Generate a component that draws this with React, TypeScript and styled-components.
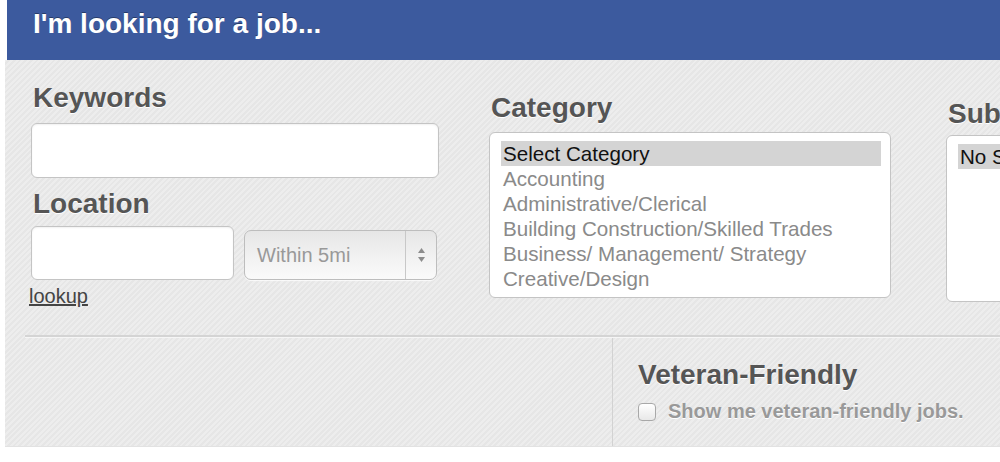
import React from 'react';
import styled, { createGlobalStyle } from 'styled-components';

const GlobalStyle = createGlobalStyle`
  html, body {
    margin: 0;
    padding: 0;
    background: #fff;
  }
  body {
    font-family: "Liberation Sans", Arial, Helvetica, sans-serif;
  }
`;

const Page = styled.div`
  width: 1000px;
  height: 462px;
  overflow: hidden;
  padding-left: 5px;
  box-sizing: border-box;
`;

const Header = styled.div`
  height: 60px;
  margin-left: 2px;
  background: #3c5a9e;
  padding: 8px 0 0 26px;
  box-sizing: border-box;
`;

const HeaderTitle = styled.h1`
  margin: 0;
  font-size: 28px;
  line-height: 32px;
  font-weight: bold;
  color: #fff;
  text-shadow: 0 -1px 0 rgba(0, 0, 0, 0.35);
`;

const Panel = styled.div`
  height: 386px;
  background: repeating-linear-gradient(135deg, #ededed 0 2px, #e6e6e6 2px 4px);
  border-bottom: 1px solid #e2e2e2;
`;

const TopRow = styled.div`
  display: flex;
  height: 275px;
  padding-left: 26px;
`;

const Column = styled.div<{ $top: number; $width: number; $gap?: number }>`
  display: flex;
  flex-direction: column;
  flex-shrink: 0;
  width: ${p => p.$width}px;
  padding-top: ${p => p.$top}px;
  margin-left: ${p => p.$gap || 0}px;
`;

const Label = styled.div<{ $mb?: number }>`
  font-size: 28px;
  line-height: 32px;
  font-weight: bold;
  color: #555;
  text-shadow: 0 1px 0 #fff;
  padding-left: 2px;
  margin-bottom: ${p => p.$mb || 0}px;
  white-space: nowrap;
`;

const TextBox = styled.div<{ $w: number; $h: number }>`
  width: ${p => p.$w}px;
  height: ${p => p.$h}px;
  box-sizing: border-box;
  background: #fff;
  border: 1px solid #c4c4c4;
  border-radius: 6px;
  box-shadow: inset 0 1px 2px rgba(0, 0, 0, 0.06);
`;

const Spacer = styled.div<{ $h: number }>`
  height: ${p => p.$h}px;
`;

const LocationRow = styled.div`
  display: flex;
  align-items: center;
  gap: 10px;
`;

const Select = styled.div`
  width: 193px;
  height: 50px;
  box-sizing: border-box;
  display: flex;
  align-items: stretch;
  border: 1px solid #bdbdbd;
  border-radius: 7px;
  background: linear-gradient(#e6e6e6, #f2f2f2 55%, #fafafa);
  box-shadow: 0 1px 1px rgba(255, 255, 255, 0.8);
  margin-top: 4px;
`;

const SelectValue = styled.div`
  flex: 1;
  display: flex;
  align-items: center;
  padding-left: 12px;
  font-size: 20px;
  color: #999;
`;

const SelectArrows = styled.div`
  width: 30px;
  border-left: 1px solid #c8c8c8;
  display: flex;
  align-items: center;
  justify-content: center;
`;

const Lookup = styled.a`
  margin-top: 5px;
  margin-left: -2px;
  font-size: 20px;
  line-height: 22px;
  color: #444;
  text-decoration: underline;
  align-self: flex-start;
`;

const ListBox = styled.div<{ $w: number; $h: number }>`
  width: ${p => p.$w}px;
  height: ${p => p.$h}px;
  box-sizing: border-box;
  background: #fff;
  border: 1px solid #c4c4c4;
  border-radius: 6px;
  padding: 8px 9px 0 11px;
  overflow: hidden;
`;

const Option = styled.div<{ $selected?: boolean }>`
  height: 25px;
  line-height: 25px;
  padding-left: 2px;
  font-size: 20.6px;
  white-space: nowrap;
  color: ${p => (p.$selected ? '#111' : '#8a8a8a')};
  background: ${p => (p.$selected ? '#d4d4d4' : 'transparent')};
`;

const Divider = styled.div`
  margin-left: 20px;
  height: 0;
  border-top: 2px solid #d4d4d4;
  border-bottom: 1px solid #f6f6f6;
`;

const BottomRow = styled.div`
  display: flex;
  height: 108px;
`;

const BottomLeft = styled.div`
  width: 607px;
  border-right: 1px solid #d2d2d2;
  flex-shrink: 0;
`;

const BottomRight = styled.div`
  padding: 21px 0 0 23px;
`;

const CheckRow = styled.div`
  display: flex;
  align-items: center;
  gap: 12px;
  margin-top: 9px;
  padding-left: 2px;
`;

const CheckBox = styled.span`
  display: inline-block;
  width: 18px;
  height: 18px;
  box-sizing: border-box;
  border: 1px solid #a8a8a8;
  border-radius: 4px;
  background: linear-gradient(#fff, #e8e8e8);
`;

const CheckText = styled.span`
  font-size: 20px;
  font-weight: bold;
  color: #999;
  text-shadow: 0 1px 0 #fff;
  white-space: nowrap;
`;

const categories = [
  'Accounting',
  'Administrative/Clerical',
  'Building Construction/Skilled Trades',
  'Business/ Management/ Strategy',
  'Creative/Design',
];

export default function App (): React.ReactElement {
  return (
    <Page>
      <GlobalStyle />
      <Header>
        <HeaderTitle>I'm looking for a job...</HeaderTitle>
      </Header>
      <Panel>
        <TopRow>
          <Column $top={22} $width={410}>
            <Label $mb={9}>Keywords</Label>
            <TextBox $w={408} $h={55} />
            <Spacer $h={10} />
            <Label $mb={6}>Location</Label>
            <LocationRow>
              <TextBox $w={203} $h={54} />
              <Select>
                <SelectValue>Within 5mi</SelectValue>
                <SelectArrows>
                  <svg width="9" height="16" viewBox="0 0 9 16">
                    <path d="M4.5 1 L8 6 H1 Z" fill="#8c8c8c" />
                    <path d="M4.5 15 L8 10 H1 Z" fill="#8c8c8c" />
                  </svg>
                </SelectArrows>
              </Select>
            </LocationRow>
            <Lookup href="#">lookup</Lookup>
          </Column>
          <Column $top={32} $width={402} $gap={48}>
            <Label $mb={8}>Category</Label>
            <ListBox $w={402} $h={166}>
              <Option $selected>Select Category</Option>
              {categories.map(c => (
                <Option key={c}>{c}</Option>
              ))}
            </ListBox>
          </Column>
          <Column $top={38} $width={200} $gap={55}>
            <Label $mb={5}>Subcategory</Label>
            <ListBox $w={200} $h={167}>
              <Option $selected>No Subcategory</Option>
            </ListBox>
          </Column>
        </TopRow>
        <Divider />
        <BottomRow>
          <BottomLeft />
          <BottomRight>
            <Label>Veteran-Friendly</Label>
            <CheckRow>
              <CheckBox />
              <CheckText>Show me veteran-friendly jobs.</CheckText>
            </CheckRow>
          </BottomRight>
        </BottomRow>
      </Panel>
    </Page>
  );
}
